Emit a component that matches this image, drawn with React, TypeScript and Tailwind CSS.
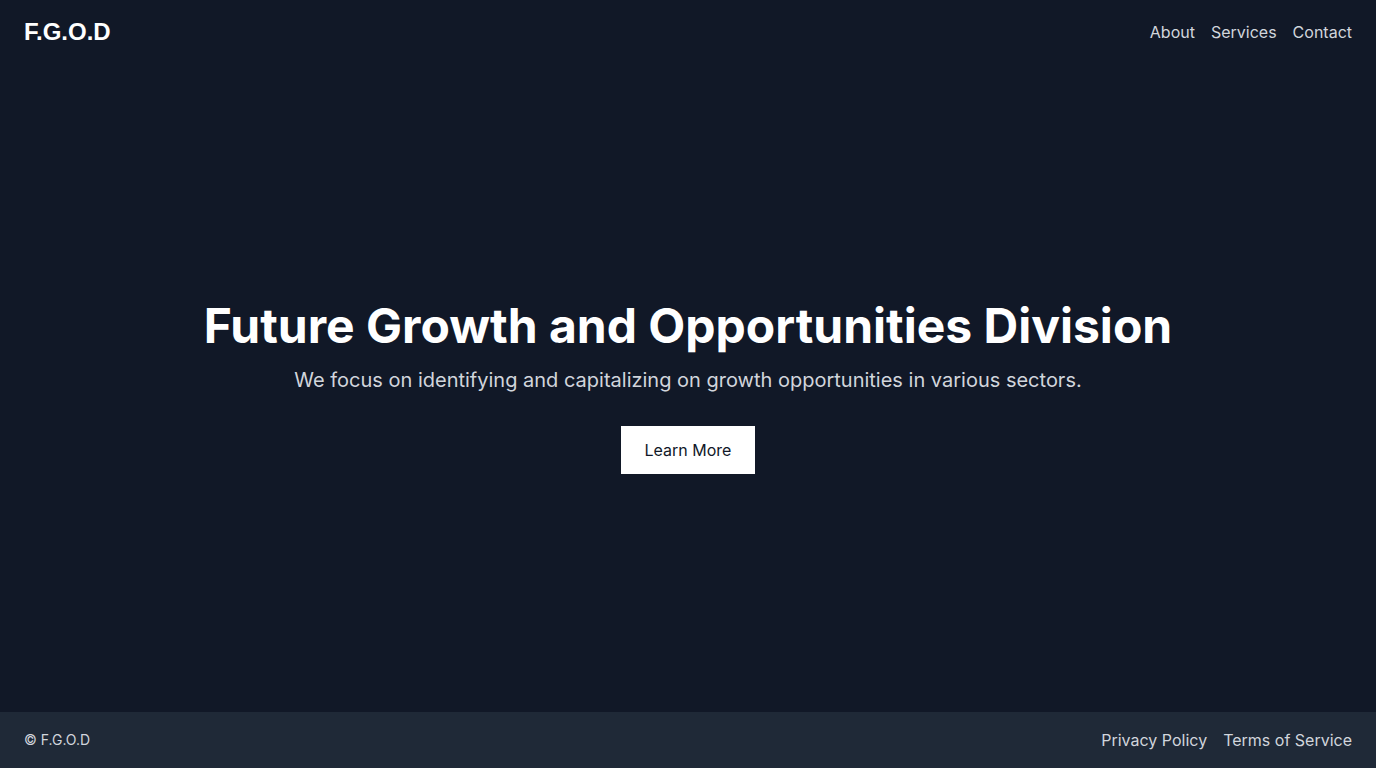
export default function App() {
  const navLinks = ['About', 'Services', 'Contact'];
  const footerLinks = ['Privacy Policy', 'Terms of Service'];

  return (
    <div className="min-h-screen flex flex-col bg-[#111827] text-white font-['Inter',sans-serif]">
      <header className="flex items-center justify-between px-6 py-4">
        <h1 className="text-2xl font-bold font-['Liberation_Sans',Arial,sans-serif]">F.G.O.D</h1>
        <nav className="flex gap-4 text-base text-gray-300">
          {navLinks.map((link) => (
            <a key={link} href="#">
              {link}
            </a>
          ))}
        </nav>
      </header>

      <main className="flex-1 flex flex-col items-center justify-center text-center">
        <h2 className="text-5xl font-bold mb-4">Future Growth and Opportunities Division</h2>
        <p className="text-xl text-gray-300 mb-8">
          We focus on identifying and capitalizing on growth opportunities in various sectors.
        </p>
        <button className="bg-white text-gray-900 px-6 py-3 text-base">Learn More</button>
      </main>

      <footer className="flex items-center justify-between bg-[#1f2937] px-6 py-4">
        <p className="text-sm text-gray-300">© F.G.O.D</p>
        <div className="flex gap-4 text-base text-gray-300">
          {footerLinks.map((link) => (
            <a key={link} href="#">
              {link}
            </a>
          ))}
        </div>
      </footer>
    </div>
  );
}
